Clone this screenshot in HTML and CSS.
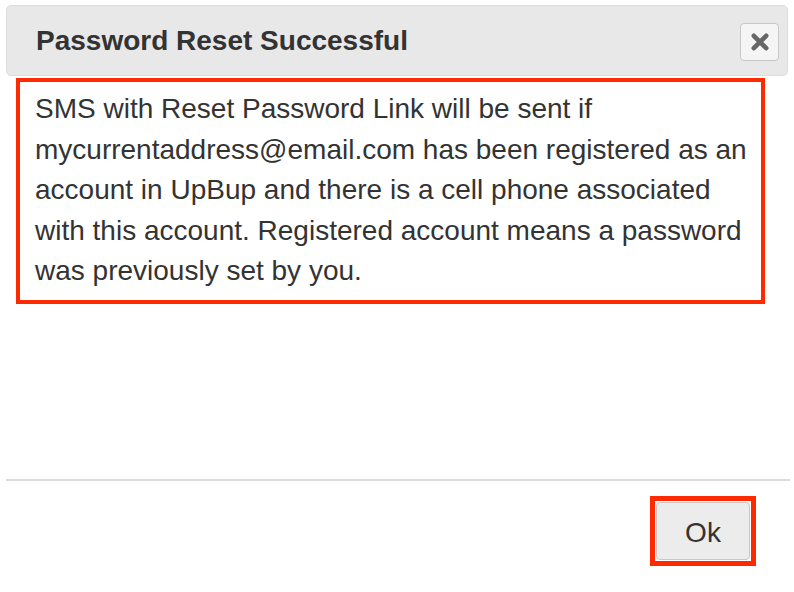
FILE: index.html
```html
<!DOCTYPE html>
<html>
<head>
<meta charset="utf-8">
<link rel="stylesheet" href="styles.css">
</head>
<body>
<div class="dialog">
  <div class="header">
    <span class="title">Password Reset Successful</span>
    <button class="close" aria-label="close">
      <svg width="20" height="20" viewBox="0 0 20 20"><path d="M3.8 3.8 L16.2 16.2 M16.2 3.8 L3.8 16.2" stroke="#666" stroke-width="4.6" stroke-linecap="round"/></svg>
    </button>
  </div>
  <div class="content">
    <div class="message">SMS with Reset Password Link will be sent if mycurrentaddress@email.com has been registered as an account in UpBup and there is a cell phone associated with this account. Registered account means a password was previously set by you.</div>
  </div>
  <div class="footer">
    <div class="ok-wrap"><button class="ok">Ok</button></div>
  </div>
</div>
</body>
</html>
```

FILE: styles.css
```css
html, body {
  margin: 0;
  padding: 0;
  background: #fff;
}
body {
  font-family: "Liberation Sans", Arial, sans-serif;
  color: #333;
}
.dialog {
  width: 794px;
  height: 592px;
  display: flex;
  flex-direction: column;
  padding-top: 5px;
  box-sizing: border-box;
}
.header {
  margin: 0 6px;
  height: 71px;
  box-sizing: border-box;
  background: #e8e8e8;
  border: 1px solid #dcdcdc;
  border-radius: 5px;
  display: flex;
  align-items: center;
  justify-content: space-between;
  padding: 0 8px 0 29px;
}
.title {
  font-weight: bold;
  font-size: 28px;
  color: #333;
  padding-top: 1px;
}
.close {
  width: 39px;
  height: 38px;
  box-sizing: border-box;
  border: 1px solid #c8c8c8;
  border-radius: 4px;
  background: #f5f5f5;
  display: flex;
  align-items: center;
  justify-content: center;
  padding: 0 0 0 1px;
  margin-top: 3px;
}
.content {
  height: 403px;
  padding: 2px 0 0 16px;
  box-sizing: border-box;
}
.message {
  width: 749px;
  height: 226px;
  box-sizing: border-box;
  border: 4px solid #ff2a00;
  padding: 7px 8px 0 15px;
  font-size: 28px;
  line-height: 40.5px;
  color: #333;
}
.footer {
  margin: 0 4px 0 6px;
  border-top: 2px solid #dcdcdc;
  display: flex;
  justify-content: flex-end;
  padding: 15px 34px 0 0;
}
.ok-wrap {
  border: 5px solid #ff2a00;
  padding: 1px;
  display: flex;
}
.ok {
  width: 94px;
  height: 58px;
  box-sizing: border-box;
  border: 1px solid #c8c8c8;
  border-radius: 4px;
  background: #ececec;
  font-family: "Liberation Sans", Arial, sans-serif;
  font-size: 28px;
  color: #333;
  padding: 3px 0 0 0;
}
```
